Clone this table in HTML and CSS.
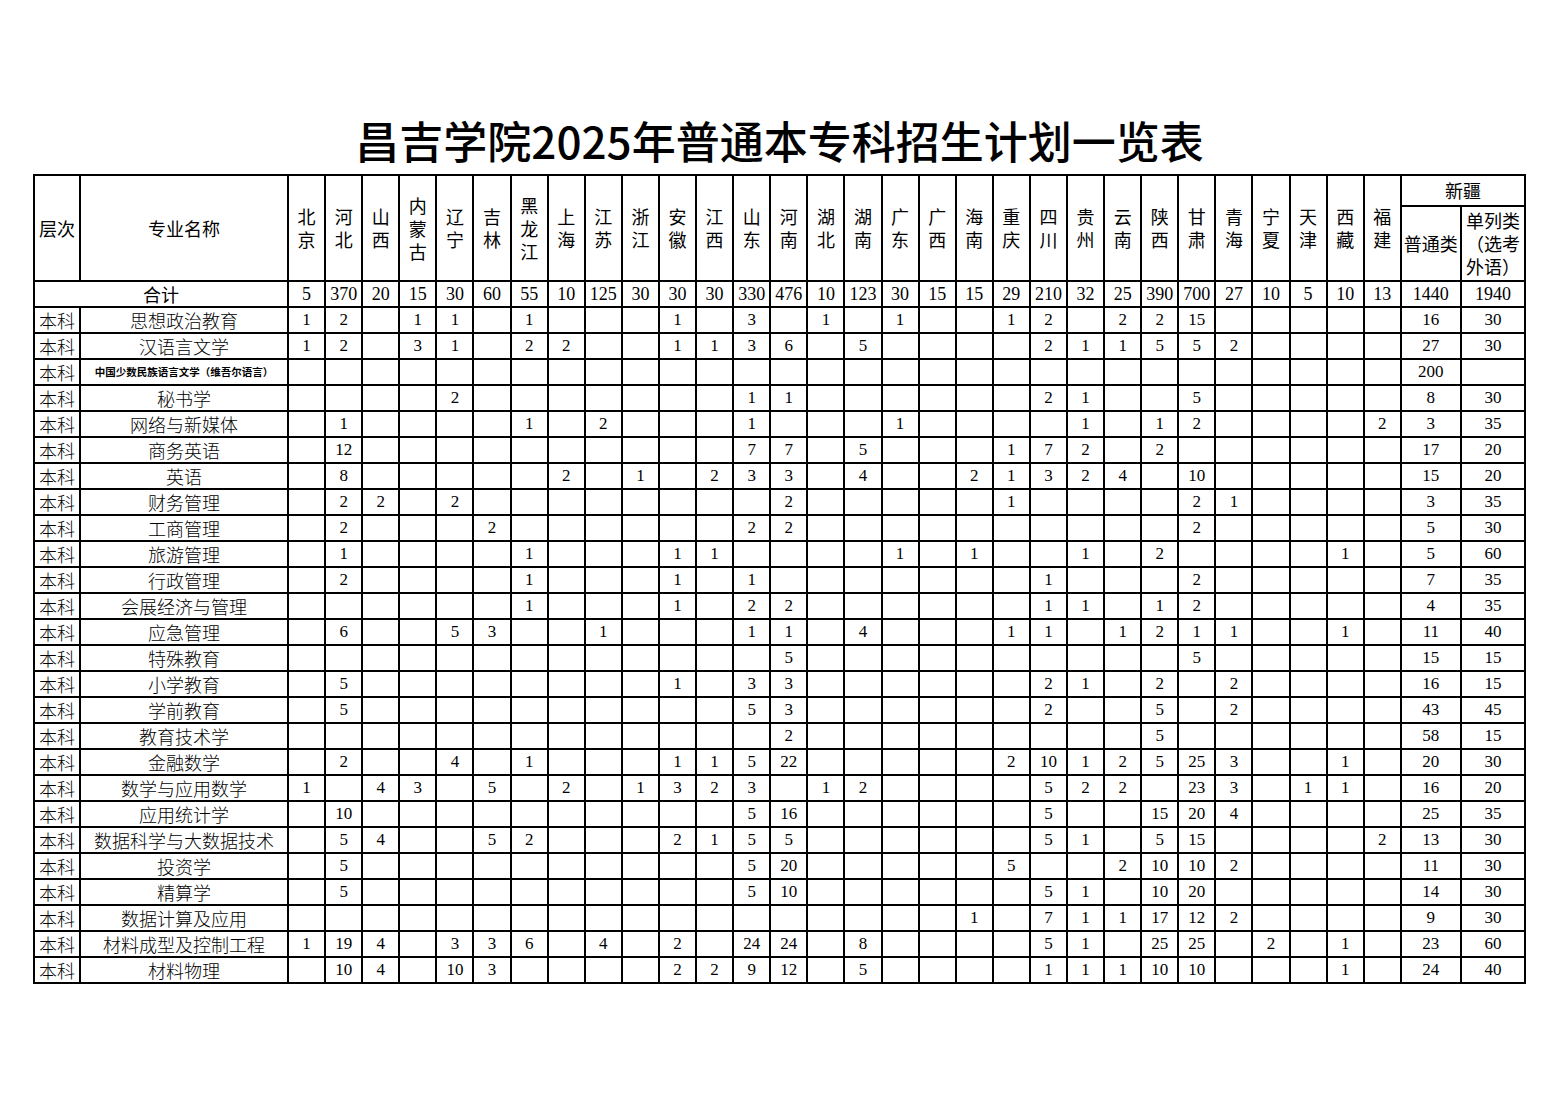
FILE: index.html
```html
<!DOCTYPE html>
<html lang="zh-CN">
<head>
<meta charset="utf-8">
<title>昌吉学院2025年普通本专科招生计划一览表</title>
<link rel="stylesheet" href="styles.css">
</head>
<body>
<div class="sheet">
<h1 class="title">昌吉学院2025年普通本专科招生计划一览表</h1>
<table class="plan">
<colgroup>
<col class="c-lv"><col class="c-nm">
<col class="c-pv"><col class="c-pv"><col class="c-pv"><col class="c-pv"><col class="c-pv"><col class="c-pv"><col class="c-pv"><col class="c-pv"><col class="c-pv"><col class="c-pv">
<col class="c-pv"><col class="c-pv"><col class="c-pv"><col class="c-pv"><col class="c-pv"><col class="c-pv"><col class="c-pv"><col class="c-pv"><col class="c-pv"><col class="c-pv">
<col class="c-pv"><col class="c-pv"><col class="c-pv"><col class="c-pv"><col class="c-pv"><col class="c-pv"><col class="c-pv"><col class="c-pv"><col class="c-pv"><col class="c-pv">
<col class="c-pt"><col class="c-dl">
</colgroup>
<thead>
<tr class="r-h1">
<th rowspan="2">层次</th><th rowspan="2">专业名称</th>
<th rowspan="2">北<br>京</th><th rowspan="2">河<br>北</th><th rowspan="2">山<br>西</th><th rowspan="2">内<br>蒙<br>古</th><th rowspan="2">辽<br>宁</th><th rowspan="2">吉<br>林</th><th rowspan="2">黑<br>龙<br>江</th><th rowspan="2">上<br>海</th><th rowspan="2">江<br>苏</th><th rowspan="2">浙<br>江</th>
<th rowspan="2">安<br>徽</th><th rowspan="2">江<br>西</th><th rowspan="2">山<br>东</th><th rowspan="2">河<br>南</th><th rowspan="2">湖<br>北</th><th rowspan="2">湖<br>南</th><th rowspan="2">广<br>东</th><th rowspan="2">广<br>西</th><th rowspan="2">海<br>南</th><th rowspan="2">重<br>庆</th>
<th rowspan="2">四<br>川</th><th rowspan="2">贵<br>州</th><th rowspan="2">云<br>南</th><th rowspan="2">陕<br>西</th><th rowspan="2">甘<br>肃</th><th rowspan="2">青<br>海</th><th rowspan="2">宁<br>夏</th><th rowspan="2">天<br>津</th><th rowspan="2">西<br>藏</th><th rowspan="2">福<br>建</th>
<th colspan="2">新疆</th>
</tr>
<tr class="r-h2">
<th>普通类</th><th>单列类<br>（选考<br>外语）</th>
</tr>
</thead>
<tbody>
<tr class="r-sum">
<td colspan="2" class="sum-label">合计</td>
<td>5</td><td>370</td><td>20</td><td>15</td><td>30</td><td>60</td><td>55</td><td>10</td><td>125</td><td>30</td>
<td>30</td><td>30</td><td>330</td><td>476</td><td>10</td><td>123</td><td>30</td><td>15</td><td>15</td><td>29</td>
<td>210</td><td>32</td><td>25</td><td>390</td><td>700</td><td>27</td><td>10</td><td>5</td><td>10</td><td>13</td>
<td>1440</td><td>1940</td>
</tr>
<tr>
<td class="lv">本科</td><td class="nm">思想政治教育</td>
<td>1</td><td>2</td><td></td><td>1</td><td>1</td><td></td><td>1</td><td></td><td></td><td></td>
<td>1</td><td></td><td>3</td><td></td><td>1</td><td></td><td>1</td><td></td><td></td><td>1</td>
<td>2</td><td></td><td>2</td><td>2</td><td>15</td><td></td><td></td><td></td><td></td><td></td>
<td>16</td><td>30</td>
</tr>
<tr>
<td class="lv">本科</td><td class="nm">汉语言文学</td>
<td>1</td><td>2</td><td></td><td>3</td><td>1</td><td></td><td>2</td><td>2</td><td></td><td></td>
<td>1</td><td>1</td><td>3</td><td>6</td><td></td><td>5</td><td></td><td></td><td></td><td></td>
<td>2</td><td>1</td><td>1</td><td>5</td><td>5</td><td>2</td><td></td><td></td><td></td><td></td>
<td>27</td><td>30</td>
</tr>
<tr>
<td class="lv">本科</td><td class="nm nm-small">中国少数民族语言文学（维吾尔语言）</td>
<td></td><td></td><td></td><td></td><td></td><td></td><td></td><td></td><td></td><td></td>
<td></td><td></td><td></td><td></td><td></td><td></td><td></td><td></td><td></td><td></td>
<td></td><td></td><td></td><td></td><td></td><td></td><td></td><td></td><td></td><td></td>
<td>200</td><td></td>
</tr>
<tr>
<td class="lv">本科</td><td class="nm">秘书学</td>
<td></td><td></td><td></td><td></td><td>2</td><td></td><td></td><td></td><td></td><td></td>
<td></td><td></td><td>1</td><td>1</td><td></td><td></td><td></td><td></td><td></td><td></td>
<td>2</td><td>1</td><td></td><td></td><td>5</td><td></td><td></td><td></td><td></td><td></td>
<td>8</td><td>30</td>
</tr>
<tr>
<td class="lv">本科</td><td class="nm">网络与新媒体</td>
<td></td><td>1</td><td></td><td></td><td></td><td></td><td>1</td><td></td><td>2</td><td></td>
<td></td><td></td><td>1</td><td></td><td></td><td></td><td>1</td><td></td><td></td><td></td>
<td></td><td>1</td><td></td><td>1</td><td>2</td><td></td><td></td><td></td><td></td><td>2</td>
<td>3</td><td>35</td>
</tr>
<tr>
<td class="lv">本科</td><td class="nm">商务英语</td>
<td></td><td>12</td><td></td><td></td><td></td><td></td><td></td><td></td><td></td><td></td>
<td></td><td></td><td>7</td><td>7</td><td></td><td>5</td><td></td><td></td><td></td><td>1</td>
<td>7</td><td>2</td><td></td><td>2</td><td></td><td></td><td></td><td></td><td></td><td></td>
<td>17</td><td>20</td>
</tr>
<tr>
<td class="lv">本科</td><td class="nm">英语</td>
<td></td><td>8</td><td></td><td></td><td></td><td></td><td></td><td>2</td><td></td><td>1</td>
<td></td><td>2</td><td>3</td><td>3</td><td></td><td>4</td><td></td><td></td><td>2</td><td>1</td>
<td>3</td><td>2</td><td>4</td><td></td><td>10</td><td></td><td></td><td></td><td></td><td></td>
<td>15</td><td>20</td>
</tr>
<tr>
<td class="lv">本科</td><td class="nm">财务管理</td>
<td></td><td>2</td><td>2</td><td></td><td>2</td><td></td><td></td><td></td><td></td><td></td>
<td></td><td></td><td></td><td>2</td><td></td><td></td><td></td><td></td><td></td><td>1</td>
<td></td><td></td><td></td><td></td><td>2</td><td>1</td><td></td><td></td><td></td><td></td>
<td>3</td><td>35</td>
</tr>
<tr>
<td class="lv">本科</td><td class="nm">工商管理</td>
<td></td><td>2</td><td></td><td></td><td></td><td>2</td><td></td><td></td><td></td><td></td>
<td></td><td></td><td>2</td><td>2</td><td></td><td></td><td></td><td></td><td></td><td></td>
<td></td><td></td><td></td><td></td><td>2</td><td></td><td></td><td></td><td></td><td></td>
<td>5</td><td>30</td>
</tr>
<tr>
<td class="lv">本科</td><td class="nm">旅游管理</td>
<td></td><td>1</td><td></td><td></td><td></td><td></td><td>1</td><td></td><td></td><td></td>
<td>1</td><td>1</td><td></td><td></td><td></td><td></td><td>1</td><td></td><td>1</td><td></td>
<td></td><td>1</td><td></td><td>2</td><td></td><td></td><td></td><td></td><td>1</td><td></td>
<td>5</td><td>60</td>
</tr>
<tr>
<td class="lv">本科</td><td class="nm">行政管理</td>
<td></td><td>2</td><td></td><td></td><td></td><td></td><td>1</td><td></td><td></td><td></td>
<td>1</td><td></td><td>1</td><td></td><td></td><td></td><td></td><td></td><td></td><td></td>
<td>1</td><td></td><td></td><td></td><td>2</td><td></td><td></td><td></td><td></td><td></td>
<td>7</td><td>35</td>
</tr>
<tr>
<td class="lv">本科</td><td class="nm">会展经济与管理</td>
<td></td><td></td><td></td><td></td><td></td><td></td><td>1</td><td></td><td></td><td></td>
<td>1</td><td></td><td>2</td><td>2</td><td></td><td></td><td></td><td></td><td></td><td></td>
<td>1</td><td>1</td><td></td><td>1</td><td>2</td><td></td><td></td><td></td><td></td><td></td>
<td>4</td><td>35</td>
</tr>
<tr>
<td class="lv">本科</td><td class="nm">应急管理</td>
<td></td><td>6</td><td></td><td></td><td>5</td><td>3</td><td></td><td></td><td>1</td><td></td>
<td></td><td></td><td>1</td><td>1</td><td></td><td>4</td><td></td><td></td><td></td><td>1</td>
<td>1</td><td></td><td>1</td><td>2</td><td>1</td><td>1</td><td></td><td></td><td>1</td><td></td>
<td>11</td><td>40</td>
</tr>
<tr>
<td class="lv">本科</td><td class="nm">特殊教育</td>
<td></td><td></td><td></td><td></td><td></td><td></td><td></td><td></td><td></td><td></td>
<td></td><td></td><td></td><td>5</td><td></td><td></td><td></td><td></td><td></td><td></td>
<td></td><td></td><td></td><td></td><td>5</td><td></td><td></td><td></td><td></td><td></td>
<td>15</td><td>15</td>
</tr>
<tr>
<td class="lv">本科</td><td class="nm">小学教育</td>
<td></td><td>5</td><td></td><td></td><td></td><td></td><td></td><td></td><td></td><td></td>
<td>1</td><td></td><td>3</td><td>3</td><td></td><td></td><td></td><td></td><td></td><td></td>
<td>2</td><td>1</td><td></td><td>2</td><td></td><td>2</td><td></td><td></td><td></td><td></td>
<td>16</td><td>15</td>
</tr>
<tr>
<td class="lv">本科</td><td class="nm">学前教育</td>
<td></td><td>5</td><td></td><td></td><td></td><td></td><td></td><td></td><td></td><td></td>
<td></td><td></td><td>5</td><td>3</td><td></td><td></td><td></td><td></td><td></td><td></td>
<td>2</td><td></td><td></td><td>5</td><td></td><td>2</td><td></td><td></td><td></td><td></td>
<td>43</td><td>45</td>
</tr>
<tr>
<td class="lv">本科</td><td class="nm">教育技术学</td>
<td></td><td></td><td></td><td></td><td></td><td></td><td></td><td></td><td></td><td></td>
<td></td><td></td><td></td><td>2</td><td></td><td></td><td></td><td></td><td></td><td></td>
<td></td><td></td><td></td><td>5</td><td></td><td></td><td></td><td></td><td></td><td></td>
<td>58</td><td>15</td>
</tr>
<tr>
<td class="lv">本科</td><td class="nm">金融数学</td>
<td></td><td>2</td><td></td><td></td><td>4</td><td></td><td>1</td><td></td><td></td><td></td>
<td>1</td><td>1</td><td>5</td><td>22</td><td></td><td></td><td></td><td></td><td></td><td>2</td>
<td>10</td><td>1</td><td>2</td><td>5</td><td>25</td><td>3</td><td></td><td></td><td>1</td><td></td>
<td>20</td><td>30</td>
</tr>
<tr>
<td class="lv">本科</td><td class="nm">数学与应用数学</td>
<td>1</td><td></td><td>4</td><td>3</td><td></td><td>5</td><td></td><td>2</td><td></td><td>1</td>
<td>3</td><td>2</td><td>3</td><td></td><td>1</td><td>2</td><td></td><td></td><td></td><td></td>
<td>5</td><td>2</td><td>2</td><td></td><td>23</td><td>3</td><td></td><td>1</td><td>1</td><td></td>
<td>16</td><td>20</td>
</tr>
<tr>
<td class="lv">本科</td><td class="nm">应用统计学</td>
<td></td><td>10</td><td></td><td></td><td></td><td></td><td></td><td></td><td></td><td></td>
<td></td><td></td><td>5</td><td>16</td><td></td><td></td><td></td><td></td><td></td><td></td>
<td>5</td><td></td><td></td><td>15</td><td>20</td><td>4</td><td></td><td></td><td></td><td></td>
<td>25</td><td>35</td>
</tr>
<tr>
<td class="lv">本科</td><td class="nm">数据科学与大数据技术</td>
<td></td><td>5</td><td>4</td><td></td><td></td><td>5</td><td>2</td><td></td><td></td><td></td>
<td>2</td><td>1</td><td>5</td><td>5</td><td></td><td></td><td></td><td></td><td></td><td></td>
<td>5</td><td>1</td><td></td><td>5</td><td>15</td><td></td><td></td><td></td><td></td><td>2</td>
<td>13</td><td>30</td>
</tr>
<tr>
<td class="lv">本科</td><td class="nm">投资学</td>
<td></td><td>5</td><td></td><td></td><td></td><td></td><td></td><td></td><td></td><td></td>
<td></td><td></td><td>5</td><td>20</td><td></td><td></td><td></td><td></td><td></td><td>5</td>
<td></td><td></td><td>2</td><td>10</td><td>10</td><td>2</td><td></td><td></td><td></td><td></td>
<td>11</td><td>30</td>
</tr>
<tr>
<td class="lv">本科</td><td class="nm">精算学</td>
<td></td><td>5</td><td></td><td></td><td></td><td></td><td></td><td></td><td></td><td></td>
<td></td><td></td><td>5</td><td>10</td><td></td><td></td><td></td><td></td><td></td><td></td>
<td>5</td><td>1</td><td></td><td>10</td><td>20</td><td></td><td></td><td></td><td></td><td></td>
<td>14</td><td>30</td>
</tr>
<tr>
<td class="lv">本科</td><td class="nm">数据计算及应用</td>
<td></td><td></td><td></td><td></td><td></td><td></td><td></td><td></td><td></td><td></td>
<td></td><td></td><td></td><td></td><td></td><td></td><td></td><td></td><td>1</td><td></td>
<td>7</td><td>1</td><td>1</td><td>17</td><td>12</td><td>2</td><td></td><td></td><td></td><td></td>
<td>9</td><td>30</td>
</tr>
<tr>
<td class="lv">本科</td><td class="nm">材料成型及控制工程</td>
<td>1</td><td>19</td><td>4</td><td></td><td>3</td><td>3</td><td>6</td><td></td><td>4</td><td></td>
<td>2</td><td></td><td>24</td><td>24</td><td></td><td>8</td><td></td><td></td><td></td><td></td>
<td>5</td><td>1</td><td></td><td>25</td><td>25</td><td></td><td>2</td><td></td><td>1</td><td></td>
<td>23</td><td>60</td>
</tr>
<tr>
<td class="lv">本科</td><td class="nm">材料物理</td>
<td></td><td>10</td><td>4</td><td></td><td>10</td><td>3</td><td></td><td></td><td></td><td></td>
<td>2</td><td>2</td><td>9</td><td>12</td><td></td><td>5</td><td></td><td></td><td></td><td></td>
<td>1</td><td>1</td><td>1</td><td>10</td><td>10</td><td></td><td></td><td></td><td>1</td><td></td>
<td>24</td><td>40</td>
</tr>
</tbody>
</table>
</div>
</body>
</html>
```
FILE: styles.css
```css
html, body {
  margin: 0;
  padding: 0;
  background: #ffffff;
}

body {
  color: #000000;
  font-family: "Liberation Serif", "Noto Sans CJK SC", serif;
}

.sheet {
  width: 1493px;
  margin: 0 auto;
  padding-top: 110px;
}

.title {
  margin: 0 0 4px;
  height: 60px;
  line-height: 60px;
  text-align: center;
  font-family: "Noto Sans CJK SC", sans-serif;
  font-size: 44px;
  font-weight: 500;
  letter-spacing: 0;
}

.plan {
  width: 1493px;
  border-collapse: collapse;
  table-layout: fixed;
}

.c-lv { width: 46px; }
.c-nm { width: 208px; }
.c-pv { width: 37.1px; }
.c-pt { width: 60px; }
.c-dl { width: 64px; }

.plan th,
.plan td {
  border: 2px solid #000000;
  padding: 0;
  text-align: center;
  vertical-align: middle;
  white-space: nowrap;
  overflow: hidden;
}

.plan th {
  font-family: "Noto Sans CJK SC", sans-serif;
  font-size: 18px;
  font-weight: 400;
  line-height: 23px;
}

.r-h1 { height: 31px; }
.r-h2 { height: 75px; }

.plan td {
  height: 24px;
  font-size: 17px;
  line-height: 24px;
}

.plan .r-sum td {
  font-size: 18px;
}

.plan .sum-label {
  font-family: "Noto Sans CJK SC", sans-serif;
}

.plan .lv,
.plan .nm {
  font-family: "Noto Sans CJK SC", sans-serif;
  font-size: 18px;
  font-weight: 300;
}

.plan .nm-small {
  font-size: 10.5px;
  font-weight: 700;
}
```
